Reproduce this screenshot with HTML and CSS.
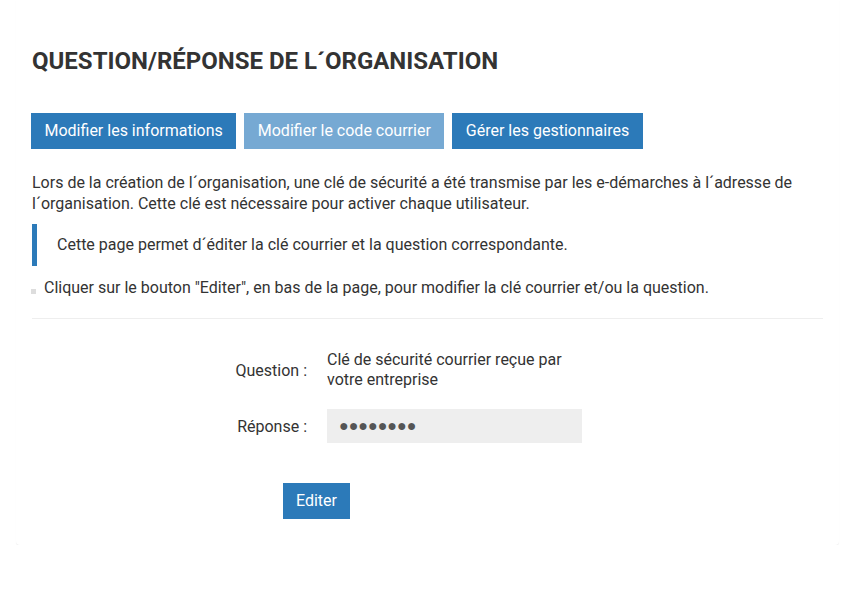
FILE: index.html
```html
<!DOCTYPE html>
<html lang="fr">
<head>
<meta charset="utf-8">
<title>Question/Réponse de l´organisation</title>
<link rel="stylesheet" href="styles.css">
</head>
<body>
<div class="card">
  <h1 class="title">QUESTION/RÉPONSE DE L´ORGANISATION</h1>
  <div class="tabs">
    <a class="btn">Modifier les informations</a>
    <a class="btn btn-disabled">Modifier le code courrier</a>
    <a class="btn">Gérer les gestionnaires</a>
  </div>
  <p class="intro">Lors de la création de <span class="nowrap">l´organisation,</span> une clé de sécurité a été transmise par les e-démarches à <span class="nowrap">l´adresse</span> de <span class="nowrap">l´organisation.</span> Cette clé est nécessaire pour activer chaque utilisateur.</p>
  <blockquote class="note">Cette page permet <span class="nowrap">d´éditer</span> la clé courrier et la question correspondante.</blockquote>
  <ul class="hints">
    <li>Cliquer sur le bouton "Editer", en bas de la page, pour modifier la clé courrier et/ou la question.</li>
  </ul>
  <hr class="sep">
  <div class="form">
    <div class="label">Question :</div>
    <div class="value">Clé de sécurité courrier reçue par votre entreprise</div>
    <div class="label">Réponse :</div>
    <div class="input">●●●●●●●●</div>
  </div>
  <div class="actions">
    <a class="btn btn-edit">Editer</a>
  </div>
</div>
</body>
</html>
```
FILE: styles.css
```css
html, body {
  margin: 0;
  padding: 0;
  background: #fff;
}
body {
  font-family: Roboto, "Liberation Sans", Arial, sans-serif;
  color: #333;
  font-size: 16px;
}
.nowrap {
  white-space: nowrap;
}
.card {
  margin: 0 16px;
  padding: 47px 16px 26px;
  background: #fff;
  border-radius: 0 0 4px 4px;
  box-shadow: 0 1px 1px rgba(0, 0, 0, 0.07);
}
.title {
  margin: 0;
  font-size: 24px;
  line-height: 28px;
  font-weight: 700;
  color: #333;
}
.tabs {
  display: flex;
  gap: 8px;
  margin-top: 38px;
  margin-left: -1px;
}
.btn {
  display: inline-block;
  background: #2c7ab9;
  color: #fff;
  font-size: 16px;
  line-height: 36px;
  height: 36px;
  padding: 0 13.5px;
  text-decoration: none;
}
.btn-disabled {
  background: #76a9d3;
}
.intro {
  margin: 23px 0 0;
  line-height: 21px;
}
.note {
  margin: 10px 0 0;
  border-left: 5px solid #2c7ab9;
  padding: 10px 20px;
  line-height: 22px;
}
.hints {
  margin: 11px 0 0;
  padding: 0;
  list-style: none;
}
.hints li {
  position: relative;
  padding-left: 12px;
  line-height: 22px;
}
.hints li::before {
  content: "";
  position: absolute;
  left: -1px;
  top: 12px;
  width: 5px;
  height: 5px;
  background: #ddd;
}
.sep {
  margin: 19px 0 0;
  border: 0;
  border-top: 1px solid #eee;
}
.form {
  display: grid;
  grid-template-columns: 275px 255px;
  column-gap: 20px;
  row-gap: 19px;
  align-items: center;
  margin-top: 31px;
}
.label {
  text-align: right;
}
.value {
  line-height: 20px;
}
.input {
  background: #eee;
  height: 34px;
  line-height: 34px;
  padding: 0 12px;
  font-size: 16px;
  color: #555;
}
.actions {
  margin-top: 40px;
  padding-left: 251px;
}
.btn-edit {
  font-size: 16px;
  padding: 0 13px;
}
```
